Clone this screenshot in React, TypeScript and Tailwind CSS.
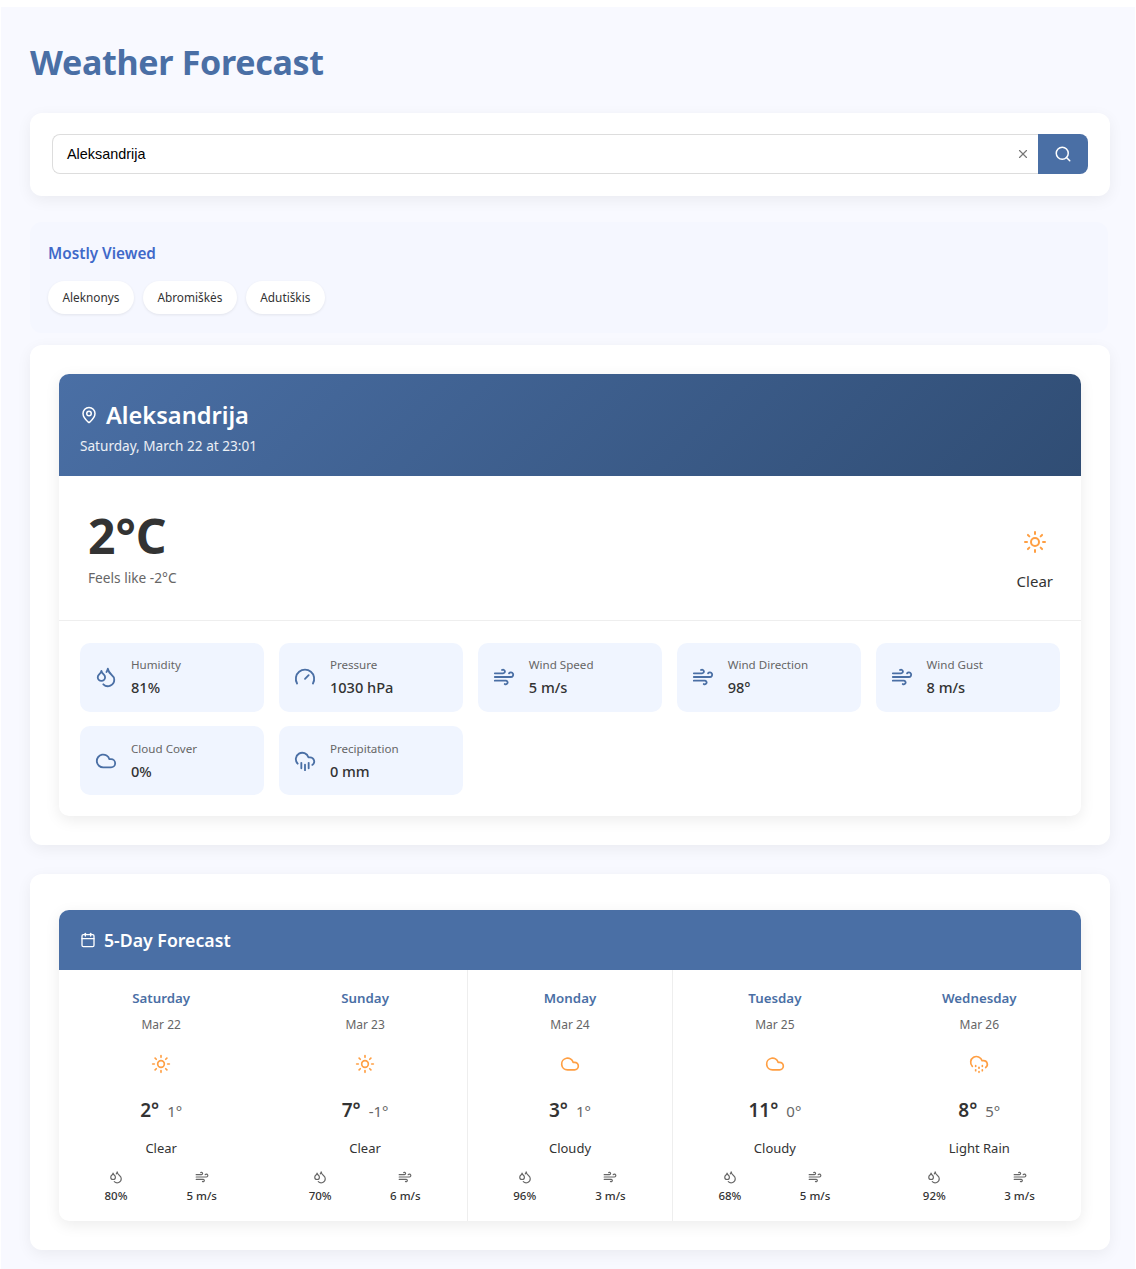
import { Calendar, Cloud, CloudDrizzle, CloudRain, Droplets, Gauge, MapPin, Search, Sun, Wind, X } from "lucide-react";
import type { LucideIcon } from "lucide-react";

const details: { label: string; value: string; icon: LucideIcon }[] = [
  { label: "Humidity", value: "81%", icon: Droplets },
  { label: "Pressure", value: "1030 hPa", icon: Gauge },
  { label: "Wind Speed", value: "5 m/s", icon: Wind },
  { label: "Wind Direction", value: "98°", icon: Wind },
  { label: "Wind Gust", value: "8 m/s", icon: Wind },
  { label: "Cloud Cover", value: "0%", icon: Cloud },
  { label: "Precipitation", value: "0 mm", icon: CloudRain },
];

const days: { day: string; date: string; high: string; low: string; text: string; hum: string; wind: string; icon: LucideIcon; cls: string }[] = [
  { day: "Saturday", date: "Mar 22", high: "2°", low: "1°", text: "Clear", hum: "80%", wind: "5 m/s", icon: Sun, cls: "" },
  { day: "Sunday", date: "Mar 23", high: "7°", low: "-1°", text: "Clear", hum: "70%", wind: "6 m/s", icon: Sun, cls: "border-r border-[#eee]" },
  { day: "Monday", date: "Mar 24", high: "3°", low: "1°", text: "Cloudy", hum: "96%", wind: "3 m/s", icon: Cloud, cls: "" },
  { day: "Tuesday", date: "Mar 25", high: "11°", low: "0°", text: "Cloudy", hum: "68%", wind: "5 m/s", icon: Cloud, cls: "border-l border-[#eee]" },
  { day: "Wednesday", date: "Mar 26", high: "8°", low: "5°", text: "Light Rain", hum: "92%", wind: "3 m/s", icon: CloudDrizzle, cls: "pl-px" },
];

export default function App() {
  return (
    <div className="bg-white pt-[7px] font-['Noto_Sans',sans-serif] text-[#333]">
      <div className="ml-px mr-px bg-[#f8f9ff] pb-[19px] pl-[29px] pr-[25px] pt-[31px]">
        <h1 className="h-[48px] text-[34px] font-bold leading-[48px] tracking-[-0.3px] text-[#4a6fa5]">Weather Forecast</h1>

        <div className="mt-[27px] rounded-xl bg-white px-[22px] pb-[22px] pt-[21px] shadow-[0_4px_15px_rgba(0,0,0,0.06)]">
          <div className="flex h-10">
            <div className="flex flex-1 items-center rounded-l-lg border border-r-0 border-[#ddd] pl-[14px] pr-[8px]">
              <span className="flex-1 pt-px font-['Liberation_Sans',sans-serif] text-[14.4px] text-black">Aleksandrija</span>
              <X className="h-[14px] w-[14px] text-[#777]" />
            </div>
            <div className="flex w-[50px] items-center justify-center rounded-r-lg bg-[#4a6fa5]">
              <Search className="h-[18px] w-[18px] text-white" />
            </div>
          </div>
        </div>

        <div className="mr-[2px] mt-[26px] rounded-xl bg-[#f5f7ff] px-[18px] pb-[19px] pt-[19px]">
          <h2 className="text-[15.3px] font-semibold leading-[24px] text-[#3f69c9]">Mostly Viewed</h2>
          <div className="mt-[16px] flex gap-[9px]">
            {["Aleknonys", "Abromiškės", "Adutiškis"].map((c) => (
              <span key={c} className="flex h-[33px] items-center rounded-full bg-white px-[14.5px] pt-px text-[11.8px] text-[#333] shadow-[0_1px_3px_rgba(0,0,0,0.08)]">
                {c}
              </span>
            ))}
          </div>
        </div>

        <div className="mt-3 rounded-xl bg-white p-[29px] shadow-[0_4px_15px_rgba(0,0,0,0.06)]">
          <div className="overflow-hidden rounded-[10px] bg-white shadow-[0_4px_15px_rgba(0,0,0,0.08)]">
            <div className="h-[102px] bg-[linear-gradient(135deg,#4a6fa5,#304d74)] px-[21px] pt-[24px] text-white">
              <div className="flex items-center gap-[8px]">
                <MapPin className="h-[18px] w-[18px]" />
                <span className="text-[23.6px] font-semibold leading-[34px]">Aleksandrija</span>
              </div>
              <div className="mt-[4px] text-[13.6px] leading-[20px] text-white/90">Saturday, March 22 at 23:01</div>
            </div>
            <div className="flex h-[145px] items-center justify-between border-b border-[#eee] px-[28px]">
              <div className="mb-[4px] pl-px">
                <div className="text-[48px] font-bold leading-[64px]">2°C</div>
                <div className="text-[13.7px] leading-[20px] text-[#666]">Feels like -2°C</div>
              </div>
              <div className="mt-[26px] flex flex-col items-center">
                <Sun className="h-6 w-6 text-[#ff9f43]" />
                <div className="mt-[16px] text-[15px] leading-[22px]">Clear</div>
              </div>
            </div>
            <div className="grid grid-cols-5 gap-[14.4px] px-[21px] pb-[21px] pt-[22px]">
              {details.map((d) => (
                <div key={d.label} className="flex h-[68.8px] items-center gap-[14px] rounded-[10px] bg-[#f0f5ff] px-[15px]">
                  <d.icon className="h-[22px] w-[22px] shrink-0 text-[#4a6fa5]" />
                  <div>
                    <div className="text-[11.6px] leading-[18px] text-[#666]">{d.label}</div>
                    <div className="mt-[2px] text-[14.6px] font-medium leading-[22px]">{d.value}</div>
                  </div>
                </div>
              ))}
            </div>
          </div>
        </div>

        <div className="mt-[29px] rounded-xl bg-white px-[29px] pb-[29px] pt-[36px] shadow-[0_4px_15px_rgba(0,0,0,0.06)]">
          <div className="overflow-hidden rounded-[10px] bg-white shadow-[0_4px_15px_rgba(0,0,0,0.08)]">
            <div className="flex h-[60px] items-center gap-[8px] bg-[#4a6fa5] px-[21px] text-white">
              <Calendar className="h-[16px] w-[16px]" />
              <span className="text-[17.7px] font-semibold">5-Day Forecast</span>
            </div>
            <div className="grid grid-cols-5">
              {days.map((d) => (
                <div key={d.day} className={`flex h-[251px] flex-col items-center pt-[18px] ${d.cls}`}>
                  <div className="text-[13.3px] font-semibold leading-[20px] text-[#4a6fa5]">{d.day}</div>
                  <div className="mt-[8px] text-[12px] leading-[18px] text-[#666]">{d.date}</div>
                  <d.icon className="mt-[20px] h-5 w-5 text-[#ff9f43]" />
                  <div className="mt-[23px] flex items-baseline gap-[8px] leading-[26px]">
                    <span className="text-[19px] font-semibold">{d.high}</span>
                    <span className="text-[15px] text-[#666]">{d.low}</span>
                  </div>
                  <div className="mt-[14px] text-[13px] leading-[20px]">{d.text}</div>
                  <div className="mt-[12px] flex w-full justify-around pl-[16px] pr-[17px]">
                    <div className="flex flex-col items-center">
                      <Droplets className="h-[14px] w-[14px] text-[#666]" />
                      <span className="mt-[4px] text-[11.5px] font-medium leading-[16px]">{d.hum}</span>
                    </div>
                    <div className="flex flex-col items-center">
                      <Wind className="h-[14px] w-[14px] text-[#666]" />
                      <span className="mt-[4px] text-[11.5px] font-medium leading-[16px]">{d.wind}</span>
                    </div>
                  </div>
                </div>
              ))}
            </div>
          </div>
        </div>
      </div>
    </div>
  );
}
